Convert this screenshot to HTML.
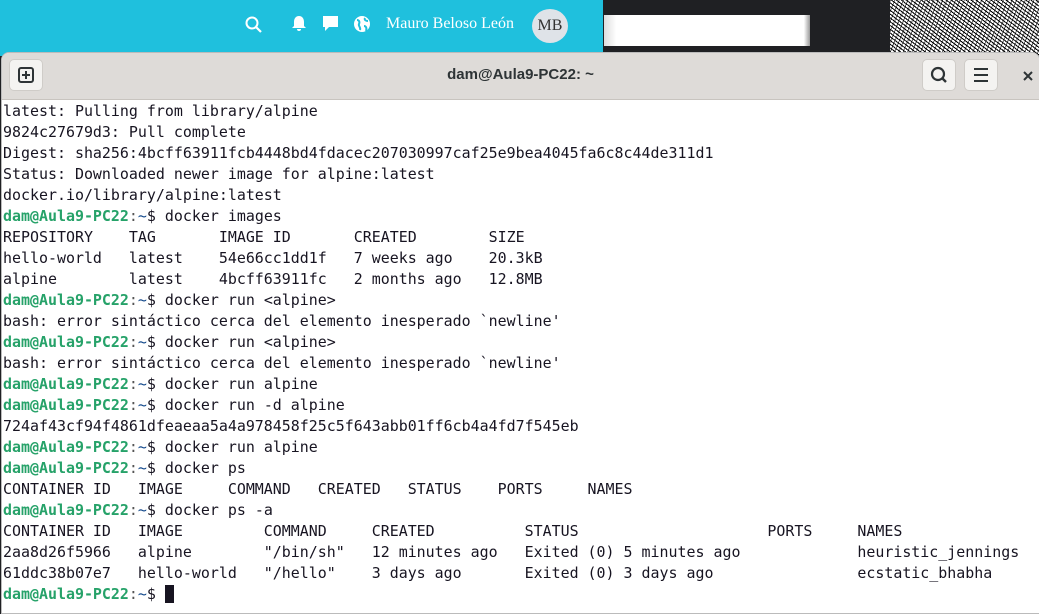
<!DOCTYPE html>
<html><head><meta charset="utf-8"><style>
body{margin:0;width:1039px;height:604px;overflow:hidden;background:#1f2023;position:relative;font-family:"Liberation Sans",sans-serif}
.top{position:absolute;left:0;top:0;width:603px;height:56px;background:#1fc0dd}
.dark{position:absolute;left:603px;top:0;width:287px;height:56px;background:#1f2023}
.inp{position:absolute;left:604px;top:15px;width:206px;height:31px;background:linear-gradient(90deg,#ddd,#fff 6%,#fff 97%,#999)}
.noise{position:absolute;left:890px;top:0;width:149px;height:56px;background:repeating-linear-gradient(37deg,#000 0 1px,#fff 1px 3px),repeating-linear-gradient(113deg,rgba(0,0,0,.6) 0 1px,transparent 1px 4px),#fff;background-blend-mode:multiply}
.name{position:absolute;left:386px;top:15px;color:#fff;font-family:"Liberation Serif",serif;font-size:16px}
.av{position:absolute;left:532px;top:9px;width:36px;height:34px;border-radius:50%;background:#dfe3e8;color:#333;font-family:"Liberation Serif",serif;font-size:16px;text-align:center;line-height:34px}
.win{position:absolute;left:1px;top:52px;width:1037px;height:560px;background:#fff;border-radius:8px 8px 0 0;overflow:hidden;border:1px solid #bbb}
.hdr{height:46px;background:#dedbd8;border-bottom:1px solid #c8c4bf;position:relative}
.btn{position:absolute;top:6px;width:32px;height:30px;background:#f4f3f1;border:1px solid #cfccc8;border-radius:5px}
.title{position:absolute;left:0;right:0;top:13px;text-align:center;font-size:15px;font-weight:bold;color:#2e3436}
pre{margin:0;padding:1px 0 0 1px;font-family:"DejaVu Sans Mono",monospace;font-size:14.95px;line-height:21px;color:#171421}
.g{color:#26a269;font-weight:bold}.c{color:#555}.b{color:#12488b}
</style></head><body>
<div class="top"></div><div class="dark"></div><div class="inp"></div><div class="noise"></div>
<svg style="position:absolute;left:244px;top:15px" width="20" height="20"><circle cx="8" cy="8" r="5.5" stroke="#fff" stroke-width="2" fill="none"/><path d="M12 12l5 5" stroke="#fff" stroke-width="2.2"/></svg>
<svg style="position:absolute;left:290px;top:14px" width="18" height="20"><path d="M9 2c-3.5 0-5 3-5 6v4l-2 2h14l-2-2V8c0-3-1.5-6-5-6zM7 15a2 2 0 0 0 4 0z" fill="#fff"/></svg>
<svg style="position:absolute;left:321px;top:14px" width="20" height="20"><path d="M2 2h15v11H8l-4 4v-4H2z" fill="#fff"/></svg>
<svg style="position:absolute;left:353px;top:15px" width="20" height="20"><circle cx="9" cy="9" r="8" fill="#fff"/><path d="M4 5c2 0 3 2 2 4s2 3 1 6M12 3c-1 2 1 3 3 3M11 11c2 0 3 2 2 5" stroke="#1fc0dd" stroke-width="2" fill="none"/></svg>
<div class="name">Mauro Beloso León</div><div class="av">MB</div>
<div class="win"><div class="hdr">
<div class="btn" style="left:7px"><svg width="32" height="30"><rect x="9" y="8" width="14" height="14" rx="2" stroke="#2e3436" stroke-width="2" fill="none"/><path d="M16 11v8M12 15h8" stroke="#2e3436" stroke-width="2"/></svg></div>
<div class="title">dam@Aula9-PC22: ~</div>
<div class="btn" style="left:920px"><svg width="32" height="30"><circle cx="15" cy="14" r="6" stroke="#2e3436" stroke-width="2.2" fill="none"/><path d="M19 18l4 4" stroke="#2e3436" stroke-width="2.4"/></svg></div>
<div class="btn" style="left:962px"><svg width="32" height="30"><path d="M9 9h14M9 15h14M9 21h14" stroke="#2e3436" stroke-width="2"/></svg></div>
<svg style="position:absolute;left:1020px;top:17px" width="12" height="12"><path d="M2 2l8 8M10 2l-8 8" stroke="#2e3436" stroke-width="2"/></svg>
</div>
<pre>latest: Pulling from library/alpine
9824c27679d3: Pull complete
Digest: sha256:4bcff63911fcb4448bd4fdacec207030997caf25e9bea4045fa6c8c44de311d1
Status: Downloaded newer image for alpine:latest
docker.io/library/alpine:latest
<span class="g">dam@Aula9-PC22</span><span class="c">:</span><span class="b">~</span>$ docker images
REPOSITORY    TAG       IMAGE ID       CREATED        SIZE
hello-world   latest    54e66cc1dd1f   7 weeks ago    20.3kB
alpine        latest    4bcff63911fc   2 months ago   12.8MB
<span class="g">dam@Aula9-PC22</span><span class="c">:</span><span class="b">~</span>$ docker run &lt;alpine&gt;
bash: error sintáctico cerca del elemento inesperado `newline'
<span class="g">dam@Aula9-PC22</span><span class="c">:</span><span class="b">~</span>$ docker run &lt;alpine&gt;
bash: error sintáctico cerca del elemento inesperado `newline'
<span class="g">dam@Aula9-PC22</span><span class="c">:</span><span class="b">~</span>$ docker run alpine
<span class="g">dam@Aula9-PC22</span><span class="c">:</span><span class="b">~</span>$ docker run -d alpine
724af43cf94f4861dfeaeaa5a4a978458f25c5f643abb01ff6cb4a4fd7f545eb
<span class="g">dam@Aula9-PC22</span><span class="c">:</span><span class="b">~</span>$ docker run alpine
<span class="g">dam@Aula9-PC22</span><span class="c">:</span><span class="b">~</span>$ docker ps
CONTAINER ID   IMAGE     COMMAND   CREATED   STATUS    PORTS     NAMES
<span class="g">dam@Aula9-PC22</span><span class="c">:</span><span class="b">~</span>$ docker ps -a
CONTAINER ID   IMAGE         COMMAND     CREATED          STATUS                     PORTS     NAMES
2aa8d26f5966   alpine        "/bin/sh"   12 minutes ago   Exited (0) 5 minutes ago             heuristic_jennings
61ddc38b07e7   hello-world   "/hello"    3 days ago       Exited (0) 3 days ago                ecstatic_bhabha
<span class="g">dam@Aula9-PC22</span><span class="c">:</span><span class="b">~</span>$ <span style="background:#171421">&#160;</span></pre>
</div>
</body></html>
